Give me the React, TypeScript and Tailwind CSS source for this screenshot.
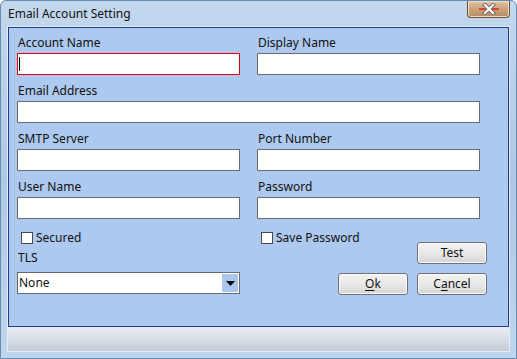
import React from 'react';

const font = { fontFamily: '"Noto Sans", "Segoe UI", sans-serif' };

function Field({ label, wide, active }: { label: string; wide?: boolean; active?: boolean }) {
  return (
    <div className="flex flex-col gap-[2px]">
      <div className="h-[16px] pl-[1px] text-[12px] leading-[16px] text-[#111]">{label}</div>
      <div
        className={`relative h-[22px] bg-white border ${active ? 'border-[#e00000]' : 'border-[#6b6b6b]'} ${wide ? 'w-[463px]' : 'w-[223px]'}`}
      >
        {active && <div className="absolute left-[1px] top-[3px] h-[14px] w-[1px] bg-black" />}
      </div>
    </div>
  );
}

function Check({ label }: { label: string }) {
  return (
    <div className="flex h-[16px] items-center gap-[3px] whitespace-nowrap">
      <div className="h-[12px] w-[12px] shrink-0 border border-[#4a4a4a] bg-white" />
      <span className="text-[12px] leading-[16px] text-[#111]">{label}</span>
    </div>
  );
}

function Btn({ children }: { children: React.ReactNode }) {
  return (
    <div className="flex h-[22px] w-[70px] shrink-0 items-center justify-center rounded-[3px] border border-[#707070] bg-gradient-to-b from-[#f3f3f3] via-[#e9e9e9] to-[#d4d4d4] text-[12px] leading-[16px] text-[#111] shadow-[inset_0_0_0_1px_#fbfbfb]">
      {children}
    </div>
  );
}

export default function App() {
  return (
    <div
      style={font}
      className="flex h-[359px] w-[517px] flex-col rounded-t-[6px] border border-[#6a8bb0] bg-gradient-to-b from-[#c3d8ee] via-[#adc8e6] to-[#bfd6ee] px-[6px]"
    >
      {/* title bar */}
      <div className="flex h-[25px] items-start justify-between">
        <div className="pl-[1px] pt-[5px] text-[12px] leading-[16px] text-[#111]">Email Account Setting</div>
        <div className="flex h-[17px] w-[43px] items-center justify-center rounded-b-[4px] border border-t-0 border-[#6e4d32] bg-gradient-to-b from-[#e2c5a3] via-[#c9a27c] to-[#b48a62] shadow-[inset_0_0_0_1px_#f0dcc4]">
          <svg width="22" height="12" viewBox="0 0 22 12">
            <line x1="1" y1="6" x2="21" y2="6" stroke="#e02020" strokeWidth="1.5" />
            <path d="M7 2 L15 10 M15 2 L7 10" stroke="#6b6b6b" strokeWidth="4" strokeLinecap="square" />
            <path d="M7 2 L15 10 M15 2 L7 10" stroke="#ffffff" strokeWidth="2.2" strokeLinecap="square" />
          </svg>
        </div>
      </div>

      {/* client */}
      <div className="flex flex-col border border-[#e3edf7]">
        <div className="flex h-[300px] flex-col gap-[8px] border border-[#1d3d8c] bg-[#adc9ef] pl-[8px] pt-[7px]">
          <div className="flex gap-[17px]">
            <Field label="Account Name" active />
            <Field label="Display Name" />
          </div>
          <Field label="Email Address" wide />
          <div className="flex gap-[17px]">
            <Field label="SMTP Server" />
            <Field label="Port Number" />
          </div>
          <div className="flex gap-[17px]">
            <Field label="User Name" />
            <Field label="Password" />
          </div>

          <div className="mt-[3px] flex gap-[17px]">
            <div className="flex w-[223px] flex-col">
              <div className="pl-[4px]">
                <Check label="Secured" />
              </div>
              <div className="mt-[4px] h-[16px] pl-[1px] text-[12px] leading-[16px] text-[#111]">TLS</div>
              <div className="mt-[6px] flex h-[22px] w-[223px] items-center justify-between border border-[#6b6b6b] bg-white pl-[1px] pr-[1px]">
                <span className="text-[12px] leading-[16px] text-[#111]">None</span>
                <div className="flex h-[18px] w-[16px] items-center justify-center bg-[#a9c6ee]">
                  <svg width="9" height="5" viewBox="0 0 9 5">
                    <path d="M0 0 H9 L4.5 5 Z" fill="#000" />
                  </svg>
                </div>
              </div>
            </div>
            <div className="flex w-[230px] flex-col items-end">
              <div className="self-start pl-[4px]">
                <Check label="Save Password" />
              </div>
              <div className="-mt-[4px] flex flex-col items-end gap-[9px]">
                <Btn>Test</Btn>
                <div className="flex gap-[9px]">
                  <Btn>
                    <span className="underline underline-offset-2">O</span>k
                  </Btn>
                  <Btn>
                    C<span className="underline underline-offset-2">a</span>ncel
                  </Btn>
                </div>
              </div>
            </div>
          </div>
        </div>
        <div className="h-[24px] bg-gradient-to-b from-[#e8ecf2] via-[#d8dee6] to-[#c4ccd6]" />
      </div>
    </div>
  );
}
